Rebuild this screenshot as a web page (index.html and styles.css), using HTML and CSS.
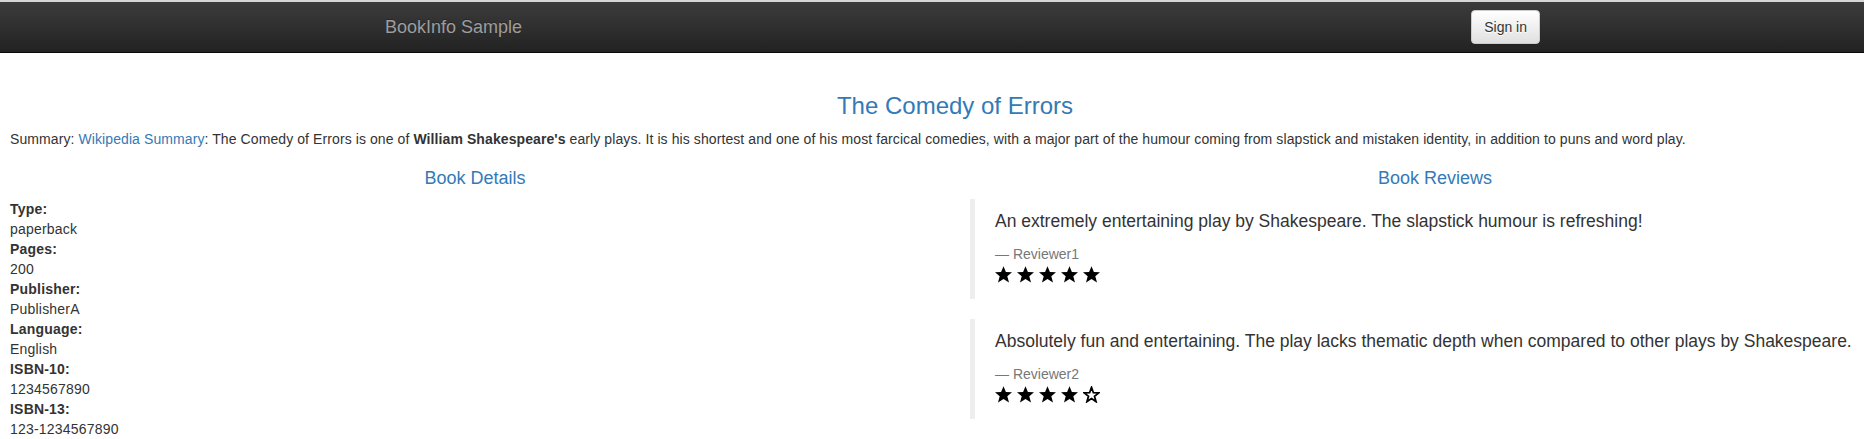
FILE: index.html
```html
<!DOCTYPE html>
<html lang="en">
<head>
<meta charset="utf-8">
<title>Simple Bookstore App</title>
<link rel="stylesheet" href="styles.css">
</head>
<body>
<div class="page">
  <nav class="navbar">
    <div class="navbar-inner">
      <a class="brand" href="#">BookInfo Sample</a>
      <button type="button" class="btn">Sign in</button>
    </div>
  </nav>
  <main class="content">
    <h3 class="title">The Comedy of Errors</h3>
    <p class="summary">Summary: <a href="#">Wikipedia Summary</a>: The Comedy of Errors is one of <b>William Shakespeare's</b> early plays. It is his shortest and one of his most farcical comedies, with a major part of the humour coming from slapstick and mistaken identity, in addition to puns and word play.</p>
    <div class="cols">
      <section class="col">
        <h4 class="col-title">Book Details</h4>
        <dl class="details">
          <dt>Type:</dt><dd>paperback</dd>
          <dt>Pages:</dt><dd>200</dd>
          <dt>Publisher:</dt><dd>PublisherA</dd>
          <dt>Language:</dt><dd>English</dd>
          <dt>ISBN-10:</dt><dd>1234567890</dd>
          <dt>ISBN-13:</dt><dd>123-1234567890</dd>
        </dl>
      </section>
      <section class="col">
        <h4 class="col-title">Book Reviews</h4>
        <blockquote class="review">
          <p>An extremely entertaining play by Shakespeare. The slapstick humour is refreshing!</p>
          <small>Reviewer1</small>
          <div class="stars">
            <svg class="star" viewBox="0 0 17 17"><polygon points="8.5,0.2 10.9,6.1 17,6.3 12.3,10.3 14,16.6 8.5,13.1 3,16.6 4.7,10.3 0,6.3 6.1,6.1"/></svg>
            <svg class="star" viewBox="0 0 17 17"><polygon points="8.5,0.2 10.9,6.1 17,6.3 12.3,10.3 14,16.6 8.5,13.1 3,16.6 4.7,10.3 0,6.3 6.1,6.1"/></svg>
            <svg class="star" viewBox="0 0 17 17"><polygon points="8.5,0.2 10.9,6.1 17,6.3 12.3,10.3 14,16.6 8.5,13.1 3,16.6 4.7,10.3 0,6.3 6.1,6.1"/></svg>
            <svg class="star" viewBox="0 0 17 17"><polygon points="8.5,0.2 10.9,6.1 17,6.3 12.3,10.3 14,16.6 8.5,13.1 3,16.6 4.7,10.3 0,6.3 6.1,6.1"/></svg>
            <svg class="star" viewBox="0 0 17 17"><polygon points="8.5,0.2 10.9,6.1 17,6.3 12.3,10.3 14,16.6 8.5,13.1 3,16.6 4.7,10.3 0,6.3 6.1,6.1"/></svg>
          </div>
        </blockquote>
        <blockquote class="review">
          <p>Absolutely fun and entertaining. The play lacks thematic depth when compared to other plays by Shakespeare.</p>
          <small>Reviewer2</small>
          <div class="stars">
            <svg class="star" viewBox="0 0 17 17"><polygon points="8.5,0.2 10.9,6.1 17,6.3 12.3,10.3 14,16.6 8.5,13.1 3,16.6 4.7,10.3 0,6.3 6.1,6.1"/></svg>
            <svg class="star" viewBox="0 0 17 17"><polygon points="8.5,0.2 10.9,6.1 17,6.3 12.3,10.3 14,16.6 8.5,13.1 3,16.6 4.7,10.3 0,6.3 6.1,6.1"/></svg>
            <svg class="star" viewBox="0 0 17 17"><polygon points="8.5,0.2 10.9,6.1 17,6.3 12.3,10.3 14,16.6 8.5,13.1 3,16.6 4.7,10.3 0,6.3 6.1,6.1"/></svg>
            <svg class="star" viewBox="0 0 17 17"><polygon points="8.5,0.2 10.9,6.1 17,6.3 12.3,10.3 14,16.6 8.5,13.1 3,16.6 4.7,10.3 0,6.3 6.1,6.1"/></svg>
            <svg class="star star-empty" viewBox="0 0 17 17"><polygon points="8.5,1.4 10.4,6.7 15.8,6.9 11.5,10.3 13,15.6 8.5,12.5 4,15.6 5.5,10.3 1.2,6.9 6.6,6.7"/></svg>
          </div>
        </blockquote>
      </section>
    </div>
  </main>
</div>
</body>
</html>
```

FILE: styles.css
```css
html {
  overflow: hidden;
}

body {
  margin: 0;
  font-family: "Liberation Sans", Arial, Helvetica, sans-serif;
  font-size: 14px;
  line-height: 1.42857143;
  color: #333;
  background: #fff;
}

.page {
  width: 1910px;
  border-top: 2px solid #d6d6d6;
}

.navbar {
  height: 50px;
  margin-bottom: 20px;
  background-image: linear-gradient(to bottom, #3c3c3c 0, #222 100%);
  border-bottom: 1px solid #080808;
}

.navbar-inner {
  width: 1170px;
  margin: 0 auto;
  padding-left: 15px;
  box-sizing: border-box;
  display: flex;
  justify-content: space-between;
  align-items: flex-start;
}

.brand {
  padding: 15px 0;
  font-size: 18px;
  line-height: 20px;
  color: #9d9d9d;
  text-decoration: none;
  text-shadow: 0 -1px 0 rgba(0, 0, 0, .25);
}

.btn {
  margin-top: 8px;
  padding: 6px 12px;
  font-family: inherit;
  font-size: 14px;
  line-height: 20px;
  color: #333;
  border: 1px solid #ccc;
  border-radius: 4px;
  background-image: linear-gradient(to bottom, #fff 0, #e0e0e0 100%);
  text-shadow: 0 1px 0 #fff;
  box-shadow: inset 0 1px 0 rgba(255, 255, 255, .15), 0 1px 1px rgba(0, 0, 0, .075);
  cursor: pointer;
}

.content {
  display: flow-root;
  padding: 0 10px;
}

.title {
  margin: 20px 0 10px;
  font-size: 24px;
  line-height: 1.1;
  font-weight: 500;
  color: #337ab7;
  text-align: center;
}

.summary {
  margin: 0 0 10px;
  letter-spacing: 0.09px;
}

.summary a {
  color: #337ab7;
  text-decoration: none;
}

.cols {
  display: grid;
  grid-template-columns: 930px 930px;
  column-gap: 30px;
}

.col-title {
  margin: 10px 0;
  font-size: 18px;
  line-height: 1.1;
  font-weight: 500;
  color: #337ab7;
  text-align: center;
}

.details {
  margin: 0 0 20px;
  letter-spacing: 0.2px;
}

.details dt {
  font-weight: 700;
}

.details dd {
  margin: 0;
}

.review {
  margin: 0 0 20px;
  padding: 10px 20px;
  border-left: 5px solid #eee;
  font-size: 17.5px;
}

.review p {
  margin: 0 0 10px;
}

.review small {
  display: block;
  font-size: 80%;
  line-height: 1.42857143;
  color: #777;
}

.review small::before {
  content: "\2014 \00A0";
}

.stars {
  height: 25px;
  box-sizing: border-box;
  padding-top: 2px;
  display: flex;
  gap: 5px;
}

.star {
  width: 17px;
  height: 17px;
  fill: #000;
}

.star-empty {
  fill: #fff;
  stroke: #000;
  stroke-width: 1.8;
  stroke-linejoin: miter;
}
```
